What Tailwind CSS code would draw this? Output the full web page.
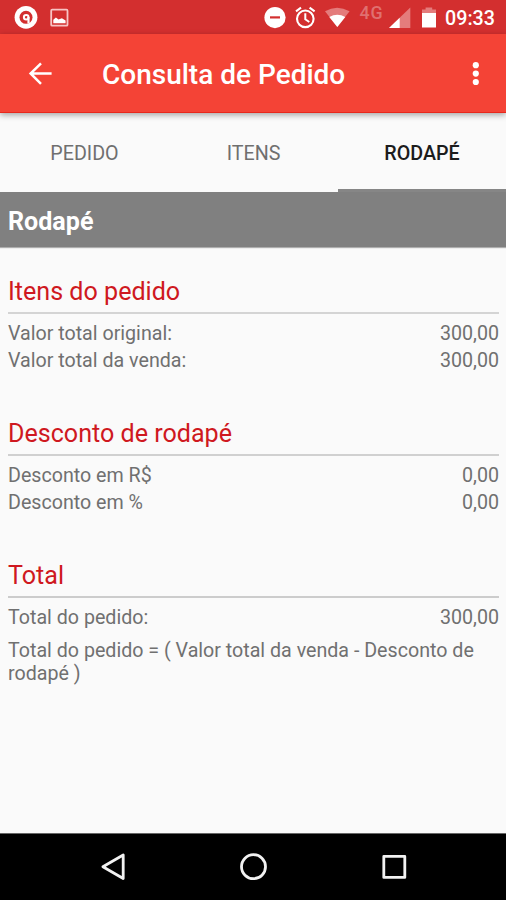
<!DOCTYPE html>
<html lang="pt-BR">
<head>
<meta charset="utf-8">
<meta name="viewport" content="width=device-width">
<title>Consulta de Pedido</title>
<script src="https://cdn.jsdelivr.net/npm/@tailwindcss/browser@4"></script>
</head>
<body class="bg-[#fafafa]">
<div class="flex h-[900px] w-[506px] flex-col overflow-hidden font-['Roboto',sans-serif]">
  <!-- Status bar -->
  <div class="h-[34px] shrink-0 bg-[#d32f2f]">
    <svg class="block" width="506" height="34" viewBox="0 0 506 34">
      <circle cx="26" cy="17.3" r="11.4" fill="#fff"/>
      <circle cx="26" cy="17.3" r="6.5" fill="#d32f2f"/>
      <circle cx="26.2" cy="17.2" r="2.3" fill="#d32f2f" stroke="#fff" stroke-width="2"/>
      <path d="M28.5 17V23.5" stroke="#fff" stroke-width="2.2"/>
      <rect x="51.2" y="9.7" width="16.3" height="16" rx="1" fill="none" stroke="#f7c4c4" stroke-width="1.8"/>
      <path d="M53.3 23.3v-3.6l2.6-2.2 2.6 2 3.4-1.2 3.7 2.2v2.8z" fill="#fff"/>
      <circle cx="275" cy="17.6" r="10.6" fill="#fff"/>
      <path d="M270 17.4h10" stroke="#d32f2f" stroke-width="2.2"/>
      <g fill="none" stroke="#fff" stroke-width="2.1">
        <circle cx="305.3" cy="18.8" r="8.3"/>
        <path d="M305.3 13.3v6l4 2.7M296 11.4l5-3.8M314.6 11.4l-5-3.8" stroke-width="2"/>
      </g>
      <path d="M325 11.3Q337 4.2 349.6 11.3L337.3 27z" fill="#e47c7c"/>
      <path d="M329.3 17Q337.3 12.3 345.3 17L337.3 27z" fill="#fff"/>
      <text x="359.5" y="18.9" font-size="17.8" font-weight="500" letter-spacing=".8" fill="#e07070" class="font-['Roboto',sans-serif]">4G</text>
      <path d="M389 28L410.3 7.5V28z" fill="#e47c7c"/>
      <path d="M389 28L399.7 17.7V28z" fill="#fff"/>
      <path d="M422 13V9.5h3.6V7.4h6.6v2.1H436V13z" fill="#e47c7c"/>
      <path d="M422 13H436V27.5H422z" fill="#fff"/>
      <text x="445" y="24.8" font-size="19.7" font-weight="500" fill="#fff" textLength="50" class="font-['Roboto',sans-serif]">09:33</text>
    </svg>
  </div>

  <!-- Toolbar -->
  <header class="relative z-10 flex h-[79px] shrink-0 items-center border-b border-[#e8281c] bg-[#f44336] pl-[28px] pr-[20px] pt-[2px] text-white shadow-[0_2px_6px_rgba(0,0,0,0.35)]">
    <svg width="24" height="24" viewBox="0 0 24 24" fill="none" stroke="#fff" stroke-width="2.5"><path d="M23.6 11.5H2.6M13 1.4L2.6 11.5L13 21.8"/></svg>
    <h1 class="ml-[50px] whitespace-nowrap pt-[2px] text-[28px] font-medium leading-none"><span>Consulta de Pedido</span></h1>
    <svg class="ml-auto" width="20" height="28" viewBox="0 0 20 28" fill="#fff"><circle cx="9.8" cy="5.2" r="3.1"/><circle cx="9.8" cy="13.6" r="3.1"/><circle cx="9.8" cy="22" r="3.1"/></svg>
  </header>

  <!-- Tabs -->
  <nav class="grid h-[79px] shrink-0 grid-cols-[169px_169px_168px] grid-rows-[79px] text-center text-[19.7px] leading-[81px] text-[#6f6f6f]">
    <div><span>PEDIDO</span></div>
    <div><span>ITENS</span></div>
    <div class="border-b-[3px] border-[#868686] font-medium text-[#1c1c1c]"><span>RODAPÉ</span></div>
  </nav>

  <div class="h-[55px] shrink-0 bg-[#808080] pl-2 text-[25.1px] font-bold leading-[59px] text-white shadow-[0_1px_1px_rgba(0,0,0,0.3)]"><span>Rodapé</span></div>

  <main class="flex-1 pl-2 pr-[7px] text-[19.65px] leading-[27px] text-[#707070]">
    <section class="pt-[28px]">
      <h2 class="h-[39px] border-b-2 border-[#d4d4d4] text-[25.1px] leading-[33px] text-[#cf1820]"><span>Itens do pedido</span></h2>
      <div class="flex justify-between pt-[6px]"><span>Valor total original:</span><span>300,00</span></div>
      <div class="flex justify-between"><span>Valor total da venda:</span><span>300,00</span></div>
    </section>
    <section class="pt-[43px]">
      <h2 class="h-[39px] border-b-2 border-[#d0d0d0] text-[25.1px] leading-[33px] text-[#cf1820]"><span>Desconto de rodapé</span></h2>
      <div class="flex justify-between pt-[6px]"><span>Desconto em R$</span><span>0,00</span></div>
      <div class="flex justify-between"><span>Desconto em %</span><span>0,00</span></div>
    </section>
    <section class="pt-[43px]">
      <h2 class="h-[39px] border-b-2 border-[#cccccc] text-[25.1px] leading-[33px] text-[#cf1820]"><span>Total</span></h2>
      <div class="flex justify-between pt-[6px]"><span>Total do pedido:</span><span>300,00</span></div>
      <p class="mt-[8px] whitespace-nowrap leading-[23px]"><span>Total do pedido = ( Valor total da venda - Desconto de</span><br>rodapé )</p>
    </section>
  </main>

  <!-- System navigation -->
  <footer class="h-[67px] shrink-0 border-t border-[#666] bg-black">
    <svg class="block" width="506" height="66" viewBox="0 834 506 66" fill="none" stroke="#f2f2f2" stroke-width="2.8" stroke-linejoin="round">
      <path d="M102.9 866.7L123.2 855V878.5z"/>
      <circle cx="253.5" cy="866.7" r="12"/>
      <rect x="383.8" y="856.4" width="21" height="21"/>
    </svg>
  </footer>
</div>
</body>
</html>
